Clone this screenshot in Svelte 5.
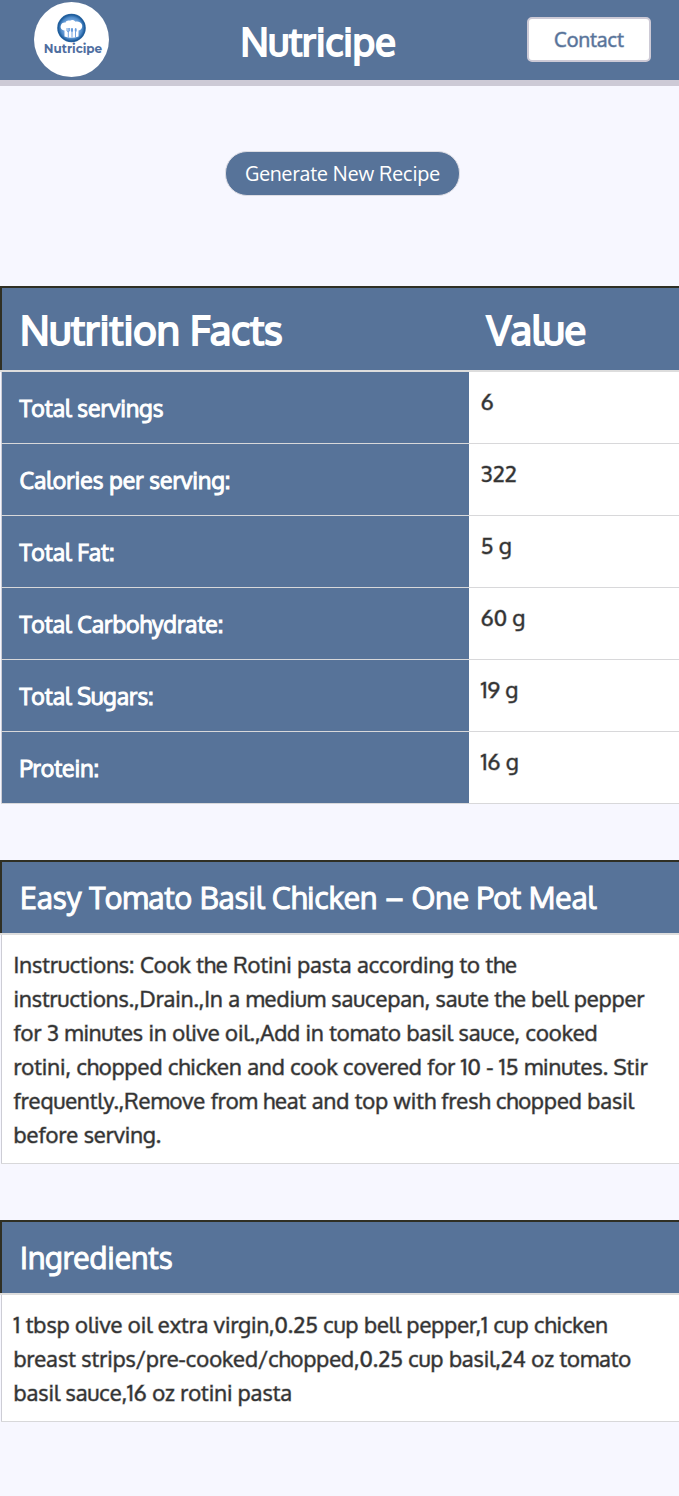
<script>
  const facts = [
    ['Total servings', '6'],
    ['Calories per serving:', '322'],
    ['Total Fat:', '5 g'],
    ['Total Carbohydrate:', '60 g'],
    ['Total Sugars:', '19 g'],
    ['Protein:', '16 g'],
  ];
  const instructions =
    'Cook the Rotini pasta according to the instructions.,Drain.,In a medium saucepan, saute the bell pepper for 3 minutes in olive oil.,Add in tomato basil sauce, cooked rotini, chopped chicken and cook covered for 10 - 15 minutes. Stir frequently.,Remove from heat and top with fresh chopped basil before serving.';
  const ingredients =
    '1 tbsp olive oil extra virgin,0.25 cup bell pepper,1 cup chicken breast strips/pre-cooked/chopped,0.25 cup basil,24 oz tomato basil sauce,16 oz rotini pasta';
</script>

<header>
  <svg class="logo" viewBox="0 0 75 75" role="img" aria-label="Nutricipe logo">
    <defs>
      <radialGradient id="disc">
        <stop offset="0.4" stop-color="#8db9ee" />
        <stop offset="0.75" stop-color="#4f8bc9" />
        <stop offset="0.92" stop-color="#1d5c9c" />
        <stop offset="1" stop-color="#2c669f" />
      </radialGradient>
    </defs>
    <circle cx="37.5" cy="37.5" r="37.5" fill="#fff" />
    <circle cx="37.5" cy="26" r="14.3" fill="url(#disc)" />
    <path
      d="M30.5 34.5V28.5C27 28 26 25.5 27 23C28 20.8 30 20.3 31.3 20.7C32 18.6 34.5 18 36 18.7C37.5 17.6 40.2 17.8 41.5 19.8C43.5 18.9 46.5 19.8 47.8 22.3C49 25 47.5 28 44.5 28.5V34.5Q37.5 37 30.5 34.5Z"
      fill="#fff"
    />
    <path
      d="M33 26v3q1.3 1.5 2.6 0v-3M34.3 26v9.5M38 26.3v9.2M41.5 29.5v6"
      fill="none"
      stroke="#659bdc"
      stroke-width="0.9"
    />
    <ellipse cx="38" cy="28" rx="1.1" ry="2" fill="#659bdc" />
    <ellipse cx="41.7" cy="28" rx="1" ry="2" fill="#659bdc" />
    <text x="39" y="51" text-anchor="middle">Nutricipe</text>
  </svg>
  <h1>Nutricipe</h1>
  <button class="contact" type="button">Contact</button>
</header>

<main>
  <div class="action">
    <button class="generate" type="button">Generate New Recipe</button>
  </div>

  <table class="facts">
    <thead>
      <tr><th scope="col">Nutrition Facts</th><th scope="col">Value</th></tr>
    </thead>
    <tbody>
      {#each facts as [name, value]}
        <tr><th scope="row">{name}</th><td>{value}</td></tr>
      {/each}
    </tbody>
  </table>

  <table>
    <thead>
      <tr><th scope="col">Easy Tomato Basil Chicken – One Pot Meal</th></tr>
    </thead>
    <tbody>
      <tr><td>Instructions: {instructions}</td></tr>
    </tbody>
  </table>

  <table>
    <thead>
      <tr><th scope="col">Ingredients</th></tr>
    </thead>
    <tbody>
      <tr><td>{ingredients}</td></tr>
    </tbody>
  </table>
</main>

<style>
  :global(body) {
    background: #f7f7ff;
    color: #333;
    font-family: Oxygen, 'Noto Sans', sans-serif;
    font-size: 22px;
    line-height: 34px;
  }
  header {
    display: flex;
    align-items: center;
    justify-content: space-between;
    height: 78px;
    padding: 0 28px 2px 34px;
    background: #577399;
    border-bottom: 6px solid #cdcad6;
  }
  .logo {
    width: 75px;
    height: 75px;
  }
  .logo text {
    font: 700 12px Montserrat, 'Open Sans', sans-serif;
    fill: #4f6ea0;
  }
  h1 {
    margin: 0;
    padding-top: 4px;
    color: #fff;
    font-size: 38px;
    font-weight: 400;
    line-height: 48px;
    -webkit-text-stroke: 2px;
  }
  button {
    font-family: inherit;
    font-size: 20px;
    line-height: 25px;
    cursor: pointer;
  }
  .contact {
    padding: 8px 25px;
    background: #fff;
    border: 2px solid #cdcad6;
    border-radius: 5px;
    color: #577399;
    -webkit-text-stroke: 1px #57739988;
  }
  .action {
    display: flex;
    justify-content: center;
    padding: 65px 0 90px 6px;
  }
  .generate {
    padding: 9px 19px;
    background: #577399;
    border: 1px solid #dddde4;
    border-radius: 22px;
    color: #fff;
  }
  table {
    width: 100%;
    margin-bottom: 56px;
    border-collapse: collapse;
    text-align: left;
  }
  thead th {
    padding: 18px;
    background: #577399;
    border-bottom: 2px solid #ddd;
    border-top: 2px solid #2f2f24;
    color: #fff;
    font-size: 30px;
    font-weight: 400;
    line-height: 35px;
    -webkit-text-stroke: 1px;
  }
  thead th:first-child {
    border-left: 2px solid #2f2f24;
  }
  .facts thead th {
    font-size: 40px;
    line-height: 46px;
    -webkit-text-stroke: 2px;
  }
  tbody th,
  td {
    padding: 12px 20px 12px 12px;
    background: #fff;
    border-bottom: 1px solid #d8d8da;
    font-weight: 400;
    vertical-align: top;
    -webkit-text-stroke: 1px #33333380;
  }
  tbody tr > :first-child {
    border-left: 1px solid #cdcdd5;
  }
  .facts th:first-child {
    width: 69%;
    box-sizing: border-box;
  }
  tbody th {
    padding: 18px;
    background: #577399;
    color: #fff;
    font-size: 23px;
    line-height: 35px;
    -webkit-text-stroke: 1px #fff;
  }
</style>
